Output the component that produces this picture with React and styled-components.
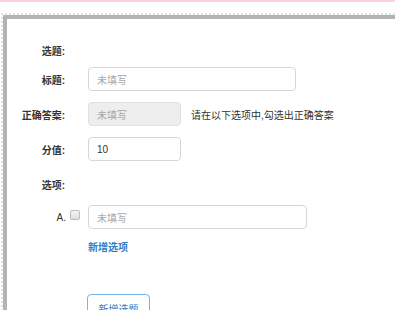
import React from 'react';
import styled, { createGlobalStyle } from 'styled-components';

const GlobalStyle = createGlobalStyle`
  html, body {
    margin: 0;
    padding: 0;
    background: #fff;
    overflow: hidden;
  }
  body {
    font-family: "Liberation Sans", "Noto Sans CJK SC", sans-serif;
    font-size: 10px;
    color: #333;
  }
`;

const TopLine = styled.div`
  height: 2px;
  background: #fcd3db;
`;

const Frame = styled.div`
  margin: 11px 0 0 1px;
  width: 420px;
  border-top: 2px dotted #e2e2e2;
  border-left: 2px dotted #e2e2e2;
`;

const Panel = styled.div`
  border-top: 4px solid #b3b3b3;
  border-left: 4px solid #b3b3b3;
  padding-top: 22px;
  height: 320px;
  box-sizing: border-box;
`;

const Row = styled.div`
  display: flex;
  align-items: center;
  height: ${p => p.$h || 24}px;
  margin-bottom: ${p => p.$mb ?? 11}px;
`;

const Label = styled.div`
  width: 58px;
  text-align: right;
  font-weight: bold;
  color: #333;
  margin-right: 23px;
  flex-shrink: 0;
`;

const OptionLetter = styled.div`
  width: 59px;
  text-align: right;
  color: #333;
  flex-shrink: 0;
  align-self: flex-start;
  margin-top: 7px;
`;

const Check = styled.span`
  width: 8px;
  height: 8px;
  border: 1px solid #bdbdbd;
  border-radius: 2px;
  background: linear-gradient(#f4f4f4, #dedede);
  margin: 5px 8px 0 4px;
  align-self: flex-start;
  flex-shrink: 0;
`;

const Input = styled.div`
  width: ${p => p.$w}px;
  height: 24px;
  box-sizing: border-box;
  border: 1px solid ${p => (p.$disabled ? '#e0e0e0' : '#d6d6d6')};
  border-radius: 4px;
  background: ${p => (p.$disabled ? '#eeeeee' : '#fff')};
  color: ${p => (p.$value ? '#333' : '#a8a8a8')};
  padding-left: 8px;
  display: flex;
  align-items: center;
  flex-shrink: 0;
`;

const Hint = styled.span`
  margin-left: 10px;
  color: #333;
  white-space: nowrap;
`;

const AddLink = styled.a`
  display: block;
  margin: 12px 0 0 81px;
  color: #2f7ec6;
  font-weight: bold;
  text-decoration: none;
  line-height: 14px;
`;

const AddButton = styled.button`
  display: block;
  margin: 39px 0 0 80px;
  width: 63px;
  height: 28px;
  border: 1px solid #7ab3e2;
  border-radius: 4px;
  background: #fff;
  color: #2f7ec6;
  font-family: inherit;
  font-size: 10px;
  padding: 0;
`;

export default function App() {
  return (
    <>
      <GlobalStyle />
      <TopLine />
      <Frame>
        <Panel>
          <Row $h={18} $mb={8}>
            <Label>选题:</Label>
          </Row>
          <Row>
            <Label>标题:</Label>
            <Input $w={208}>未填写</Input>
          </Row>
          <Row>
            <Label>正确答案:</Label>
            <Input $w={93} $disabled>未填写</Input>
            <Hint>请在以下选项中,勾选出正确答案</Hint>
          </Row>
          <Row>
            <Label>分值:</Label>
            <Input $w={93} $value>10</Input>
          </Row>
          <Row $mb={9}>
            <Label>选项:</Label>
          </Row>
          <Row $mb={0}>
            <OptionLetter>A.</OptionLetter>
            <Check />
            <Input $w={219}>未填写</Input>
          </Row>
          <AddLink href="#">新增选项</AddLink>
          <AddButton>新增选题</AddButton>
        </Panel>
      </Frame>
    </>
  );
}
